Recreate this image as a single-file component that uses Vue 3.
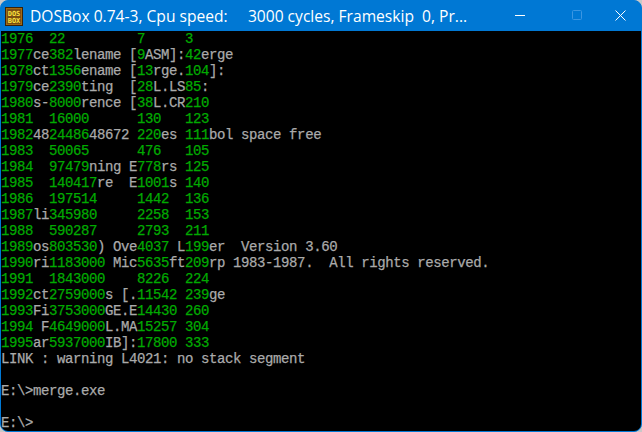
<script setup>
// Each row alternates green, gray, green, gray...
const rows = [
  ['1976  22', '', '         7', '', '     3'],
  ['1977', 'ce', '382', 'lename [', '9', 'ASM]:', '42', 'erge'],
  ['1978', 'ct', '1356', 'ename [', '13', 'rge.', '104', ']:'],
  ['1979', 'ce', '2390', 'ting  [', '28', 'L.LS', '85', ':'],
  ['1980', 's-', '8000', 'rence [', '38', 'L.CR', '210'],
  ['1981  16000      130   123'],
  ['1982', '48', '24486', '48672 ', '220', 'es ', '111', 'bol space free'],
  ['1983  50065      476   105'],
  ['1984  97479', 'ning E', '778', 'rs ', '125'],
  ['1985  140417', 're  E', '1001', 's ', '140'],
  ['1986  197514     1442  136'],
  ['1987', 'li', '345980     2258  153'],
  ['1988  590287     2793  211'],
  ['1989', 'os', '803530', ') Ove', '4037', ' L', '199', 'er  Version 3.60'],
  ['1990', 'ri', '1183000', ' Mic', '5635', 'ft', '209', 'rp 1983-1987.  All rights reserved.'],
  ['1991  1843000    8226  224'],
  ['1992', 'ct', '2759000', 's [.', '11542 239', 'ge'],
  ['1993', 'Fi', '3753000', 'GE.E', '14430 260'],
  ['1994', ' F', '4649000', 'L.MA', '15257 304'],
  ['1995', 'ar', '5937000', 'IB]:', '17800 333'],
  ['', 'LINK : warning L4021: no stack segment'],
  [''],
  ['', 'E:\\>merge.exe'],
  [''],
  ['', 'E:\\>']
]
</script>

<template>
  <div class="win">
    <header class="bar">
      <svg class="logo" width="18" height="19" viewBox="0 0 18 19">
        <rect width="18" height="19" fill="#3a2206" />
        <rect x="1" y="1" width="16" height="17" fill="#a06a14" />
        <rect x="2" y="2" width="14" height="15" fill="#7a4c10" />
        <text x="9" y="8.5" class="logo-t">DOS</text>
        <text x="9" y="16" class="logo-t">BOX</text>
      </svg>
      <span class="title">DOSBox 0.74-3, Cpu speed:&nbsp;&nbsp;&nbsp;&nbsp; 3000 cycles, Frameskip&nbsp; 0, Pr...</span>
      <div class="ctrls">
        <svg class="ctrl" width="58" height="30" viewBox="0 0 58 30">
          <path d="M24 14.5h10" stroke="#fff" fill="none" />
        </svg>
        <svg class="ctrl" width="56" height="30" viewBox="0 0 56 30">
          <rect x="23.5" y="9.5" width="9" height="9" rx="1" stroke="#3b96e2" fill="none" />
        </svg>
        <svg class="ctrl" width="36" height="30" viewBox="0 0 36 30">
          <path d="M10.5 9.5l10 10M20.5 9.5l-10 10" stroke="#fff" fill="none" />
        </svg>
      </div>
    </header>
    <main class="screen">
      <div v-for="(row, i) in rows" :key="i" class="row">
        <span v-for="(seg, j) in row" :key="j" :class="j % 2 ? 'gray' : 'green'">{{ seg }}</span>
      </div>
    </main>
  </div>
</template>

<style scoped>
.win {
  box-sizing: border-box;
  width: 642px;
  height: 432px;
  border: 1px solid #0078d4;
  border-radius: 8px;
  background: #0078d4;
  overflow: hidden;
}
.bar {
  display: flex;
  align-items: center;
  height: 30px;
  background: #0078d4;
}
.logo {
  margin-left: 4px;
  flex: none;
}
.logo-t {
  font-family: "DejaVu Sans Mono", monospace;
  font-size: 7px;
  font-weight: 700;
  fill: #f8e040;
  text-anchor: middle;
}
.title {
  margin-left: 7px;
  font-family: "Open Sans", "Noto Sans", sans-serif;
  font-size: 15.6px;
  line-height: 20px;
  color: #fff;
  white-space: nowrap;
}
.ctrls {
  display: flex;
  margin-left: auto;
}
.ctrl {
  display: block;
  flex: none;
}
.screen {
  height: 400px;
  background: #000;
  font-family: "Liberation Mono", monospace;
  font-size: 14px;
  letter-spacing: -0.4px;
  line-height: 16px;
  white-space: pre;
  -webkit-text-stroke: 0.25px currentColor;
}
.row {
  height: 16px;
}
.green {
  color: #00aa00;
}
.gray {
  color: #aaaaaa;
}
</style>

<style>
html, body {
  background: #c8c8c8;
}
</style>
